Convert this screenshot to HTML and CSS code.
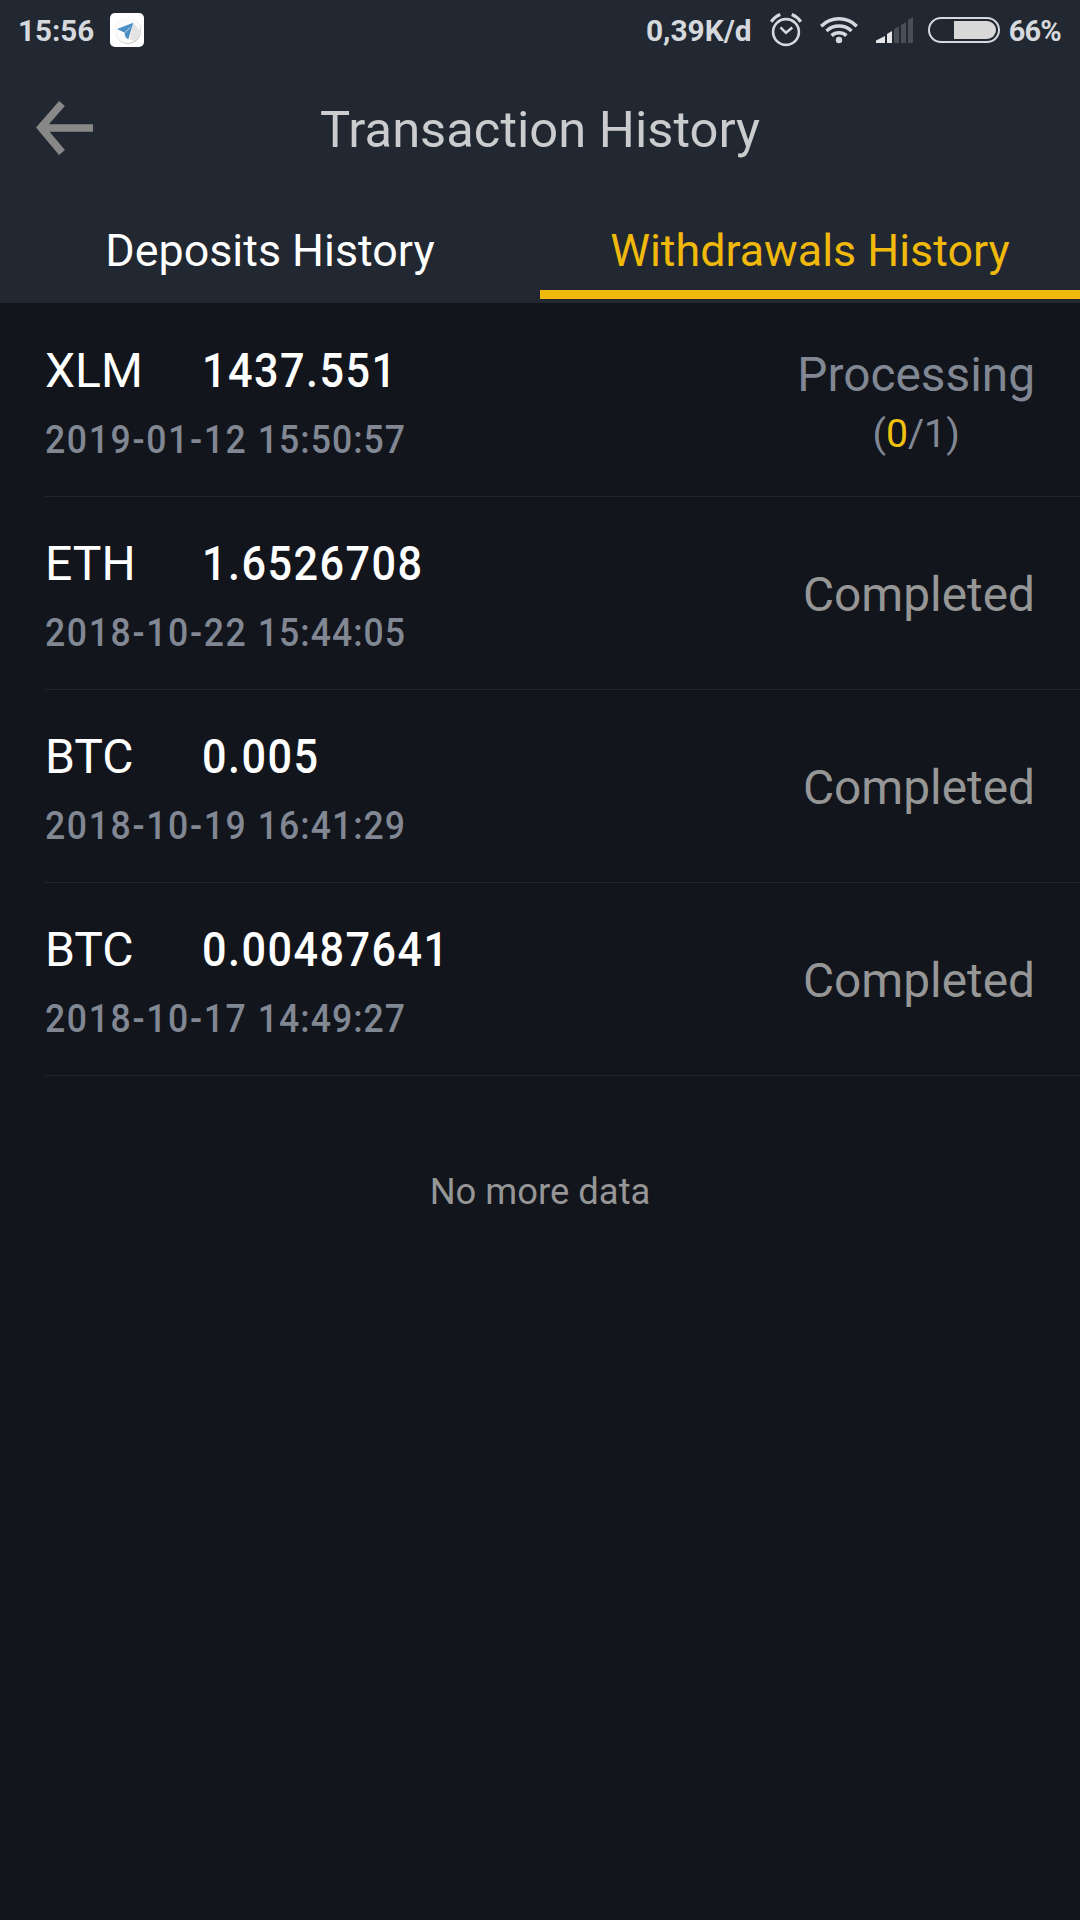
FILE: index.html
```html
<!DOCTYPE html>
<html lang="en">
<head>
<meta charset="utf-8">
<title>Transaction History</title>
<link rel="stylesheet" href="styles.css">
</head>
<body>
<div class="screen">
  <header class="top">
    <div class="status">
      <span class="clock">15:56</span>
      <svg class="app" width="34" height="34" viewBox="0 0 34 34">
        <rect width="34" height="34" rx="5" fill="#fff"/>
        <circle cx="18" cy="17.8" r="13" fill="#bbb"/>
        <circle cx="17.5" cy="17" r="13" fill="#fafafa"/>
        <path d="M23 10 20 26 23 28A13 13 0 0 0 30 17Z" fill="#e4e4e4"/>
        <path d="M7 16 23.300 9.800 18.300 26.300 15.700 24.500 14.300 19.500Z" fill="#4b8fc4"/>
        <path d="M14.300 20 20.500 14.300" stroke="#dcebf5" stroke-width=".8"/>
      </svg>
      <span class="rate">0,39K/d</span>
      <svg class="alarm" width="32" height="34" viewBox="0 0 32 34" fill="none" stroke="#d5d8dd">
        <circle cx="16" cy="19" r="12.900" stroke-width="2.600"/>
        <path d="M10.500 14.300 16 19.800 22.300 14.500" stroke-width="2.600"/>
        <path d="M1.300 8.800Q4.500 3.800 10.300 1.600M30.700 8.800Q27.500 3.800 21.700 1.600" stroke-width="3.200"/>
      </svg>
      <svg class="wifi" width="38" height="28" viewBox="0 0 38 28" fill="none" stroke="#d5d8dd" stroke-width="3.500">
        <path d="M1.200 10.200A25.200 25.200 0 0 1 36.800 10.200M6.500 15A18.200 18.200 0 0 1 31.500 15M11.600 19.600A11 11 0 0 1 26.400 19.600"/>
        <circle cx="19" cy="24" r="3.200" fill="#d5d8dd" stroke="none"/>
      </svg>
      <svg class="signal" width="37" height="26" viewBox="0 0 37 26">
        <path d="M0 26V23.500L9 19V26ZM11 26V17L16 14V26Z" fill="#e4e5e7"/>
        <path d="M18 26V12L23 9.500V26ZM25 26V8L30 5V26ZM32 26V3L37 0V26Z" fill="#484e58"/>
      </svg>
      <svg class="battery" width="72" height="26" viewBox="0 0 72 26">
        <rect x="1" y="1" width="70" height="24" rx="12" fill="none" stroke="#d5d8dd" stroke-width="2"/>
        <path d="M26 4H59A9 9 0 0 1 59 22H26Z" fill="#d8d8d8"/>
      </svg>
      <span class="percent">66%</span>
    </div>
    <div class="titlebar">
      <svg class="back" width="57" height="54" viewBox="0 0 57 54" fill="none" stroke="#888" stroke-width="7.600">
        <path d="M26 2.500 5 26.500 26 51.500M7 27H57"/>
      </svg>
      <h1 class="title">Transaction History</h1>
    </div>
    <nav class="tabs">
      <a class="tab">Deposits History</a>
      <a class="tab active">Withdrawals History</a>
    </nav>
  </header>
  <main class="list">
    <section class="row">
      <div class="info">
        <div class="line"><span class="coin">XLM</span><span class="amount">1437.551</span></div>
        <div class="date"><span class="day">2019-01-12</span> 15:50:57</div>
      </div>
      <div class="state processing"><div>Processing</div><div class="count">(<span class="done">0</span>/1)</div></div>
    </section>
    <section class="row">
      <div class="info">
        <div class="line"><span class="coin">ETH</span><span class="amount">1.6526708</span></div>
        <div class="date"><span class="day">2018-10-22</span> 15:44:05</div>
      </div>
      <div class="state">Completed</div>
    </section>
    <section class="row">
      <div class="info">
        <div class="line"><span class="coin">BTC</span><span class="amount">0.005</span></div>
        <div class="date"><span class="day">2018-10-19</span> 16:41:29</div>
      </div>
      <div class="state">Completed</div>
    </section>
    <section class="row">
      <div class="info">
        <div class="line"><span class="coin">BTC</span><span class="amount">0.00487641</span></div>
        <div class="date"><span class="day">2018-10-17</span> 14:49:27</div>
      </div>
      <div class="state">Completed</div>
    </section>
  </main>
  <p class="end">No more data</p>
</div>
</body>
</html>
```
FILE: styles.css
```css
* { box-sizing: border-box; }
body { margin: 0; background: #12151c; font-family: Roboto, sans-serif; }
.screen { width: 1080px; height: 1920px; background: #12151c; overflow: hidden; }
.top { height: 303px; background: #212832; }
.status { height: 60px; display: flex; align-items: center; padding: 0 19px 0 18px; color: #d5d8dd; font-size: 29.900px; font-weight: 700; white-space: nowrap; }
.clock { font-size: 29.600px; padding-top: 1px; }
.app { margin-left: 16px; }
.rate { margin-left: auto; }
.alarm { margin-left: 18px; }
.wifi { margin-left: 18px; }
.signal { margin-left: 18px; }
.battery { margin-left: 15px; }
.percent { margin-left: 9px; font-size: 29px; letter-spacing: -.8px; padding-top: 1px; }
.titlebar { height: 136px; display: grid; grid-template-columns: 93px 1fr 93px; align-items: center; }
.back { margin-left: 36px; }
.title { margin: 0; padding-top: 4px; font-size: 50.700px; line-height: 60px; font-weight: 400; color: #cbcccd; text-align: center; white-space: nowrap; }
.tabs { height: 107px; display: grid; grid-template-columns: 1fr 1fr; padding: 4px 0; }
.tab { height: 99px; padding-top: 19px; line-height: 64px; font-size: 44.800px; color: #fff; text-align: center; white-space: nowrap; }
.tab.active { color: #f0b90b; border-bottom: 9px solid #f0b90b; }
.row { height: 193px; margin-left: 45px; padding-right: 45px; display: flex; justify-content: space-between; align-items: center; border-bottom: 1px solid #22262d; }
.list { padding-top: 1px; }
.info { padding-top: 10px; }
.line { display: flex; height: 69px; align-items: center; color: #fff; font-size: 48px; white-space: nowrap; }
.coin { width: 157px; }
/* Digits are set slightly condensed with open tracking. */
.amount { font-weight: 500; letter-spacing: 1.600px; transform: scaleX(.9); transform-origin: left; }
.date { height: 69px; line-height: 69px; font-size: 39.500px; font-weight: 500; color: #818793; white-space: nowrap; letter-spacing: 1.150px; word-spacing: .5px; transform: scaleX(.9); transform-origin: left; }
.day { letter-spacing: 1.850px; }
.state { font-size: 47.800px; color: #969696; line-height: 60px; text-align: center; padding-top: 4px; }
.processing { color: #818793; padding-top: 8px; }
.count { font-size: 39.200px; line-height: 58px; }
.done { color: #f0c20f; }
.end { margin: 86px 0 0; font-size: 36.400px; line-height: 60px; color: #969696; text-align: center; }
```
